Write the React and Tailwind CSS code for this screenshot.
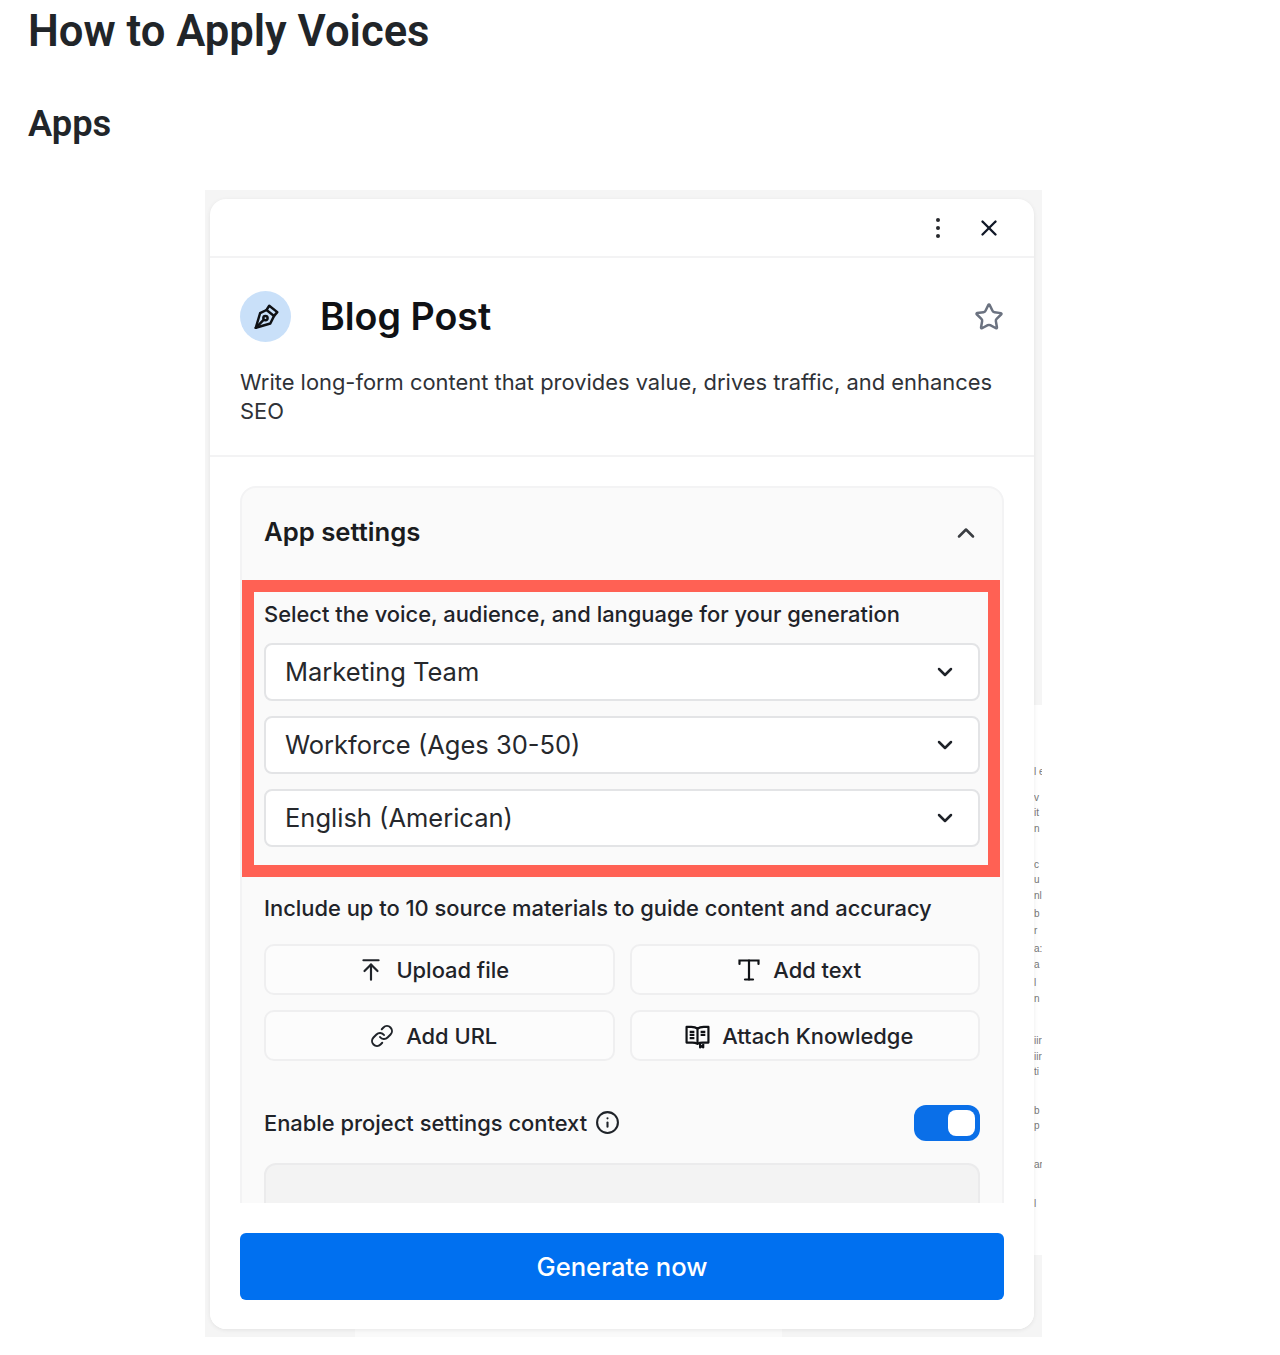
import { ChevronDown, ChevronUp, X, Star, ArrowUpToLine, Link, Info } from 'lucide-react'

const FONT = "font-['Inter','Noto_Sans',sans-serif]"

// tiny bits of the page behind the modal, cut off at the frame's right edge
const behind = [
  [766, 'l e'], [792, 'v'], [807, 'it'], [823, 'n'], [859, 'c'], [874, 'u'], [890, 'nl'],
  [908, 'b'], [925, 'r'], [943, 'a:'], [959, 'a'], [977, 'l'], [993, 'n'], [1035, 'iir'],
  [1051, 'iir'], [1066, 'ti'], [1105, 'b'], [1120, 'p'], [1159, 'ar'], [1198, 'l'],
]

function PenIcon() {
  return (
    <svg width="28" height="28" viewBox="0 0 26 26" fill="none" stroke="#0f1115" strokeWidth="2.300" strokeLinejoin="round" strokeLinecap="round">
      <path d="M16 2.500 23.500 8.500 20.500 12 13.500 6.500z" />
      <path d="M13.500 6.500 7.500 9.500 3.500 23l13.500-4 3.500-7" />
      <path d="M3.500 23l7-7" />
      <circle cx="12.500" cy="14" r="2" />
    </svg>
  )
}

function SerifT() {
  return (
    <svg width="24" height="24" viewBox="0 0 24 24" fill="none" stroke="#0f1115" strokeWidth="2.200" strokeLinecap="round">
      <path d="M2.500 6V2.500h19V6" />
      <path d="M12 2.500v19" />
      <path d="M8 21.500h8" />
    </svg>
  )
}

function BookIcon() {
  return (
    <svg width="25" height="25" viewBox="0 0 24 24" fill="none" stroke="#0f1115" strokeWidth="2.100" strokeLinejoin="round">
      <path d="M12 4.500c-1.500-1.200-3.500-1.700-6-1.700H1.500v15H7c2 0 3.500.3 5 1.200 1.500-.9 3-1.200 5-1.200h5.500v-15H18c-2.500 0-4.500.5-6 1.700z" />
      <path d="M12 4.500v14.500" />
      <path d="M4.500 7.500h4.500M4.500 10.500h4.500M4.500 13.500h4.500M15 7.500h4.500M15 10.500h4.500" />
      <path d="M14.500 19v3.500l1.500-1.200 1.500 1.200V19" />
    </svg>
  )
}

function Select({ label }) {
  return (
    <div className="h-[58px] flex items-center justify-between pl-[19px] pr-[21px] bg-white border-2 border-[#e3e4e6] rounded-lg">
      <span className="text-[25.500px] text-[#26282c]">{label}</span>
      <ChevronDown size={24} strokeWidth={2.500} className="text-[#1f2329]" />
    </div>
  )
}

function SourceButton({ icon, label }) {
  return (
    <button className="h-[51px] flex items-center justify-center gap-[12px] pr-[11px] pt-[1px] bg-[#fcfcfc] border-2 border-[#efeff0] rounded-[10px] text-[21.900px] font-medium text-[#1f2329]">
      {icon}
      <span>{label}</span>
    </button>
  )
}

export default function App() {
  return (
    <div className="bg-white min-h-[1355px] font-['Roboto',sans-serif] text-[#212529]">
      <h1 className="pl-[28px] pt-[6px] text-[43.600px] leading-[52px] font-semibold">How to Apply Voices</h1>
      <h2 className="pl-[28px] pt-[44px] text-[36.300px] leading-[44px] font-semibold">Apps</h2>

      <div className={`relative mt-[44px] ml-[205px] w-[837px] h-[1147px] bg-[#f5f5f5] pt-[9px] pl-[5px] ${FONT}`}>
        {/* page behind the modal, peeking out on the right */}
        <div className="absolute left-[829px] top-[515px] w-[8px] h-[550px] bg-white" />
        {behind.map(([y, t]) => (
          <span key={y} className="absolute left-[829px] w-[8px] overflow-hidden whitespace-nowrap text-[10px] leading-[12px] text-[#777] font-['Liberation_Sans',sans-serif]" style={{ top: y - 190 }}>{t}</span>
        ))}
        <div className="absolute left-[150px] right-[260px] bottom-0 h-[8px] bg-[#fafafa]" />

        <div className="relative w-[824px] h-[1130px] bg-white rounded-[16px] shadow-[0_1px_4px_rgba(0,0,0,0.08)] flex flex-col overflow-hidden">
          {/* top bar */}
          <div className="h-[59px] shrink-0 flex items-center justify-end gap-[36px] pr-[32px] border-b-2 border-[#f3f3f4]">
            <div className="flex flex-col gap-[4px]">
              <span className="w-[4px] h-[4px] rounded-full bg-[#26282c]" />
              <span className="w-[4px] h-[4px] rounded-full bg-[#26282c]" />
              <span className="w-[4px] h-[4px] rounded-full bg-[#26282c]" />
            </div>
            <X size={26} strokeWidth={2.200} className="text-[#111827]" />
          </div>

          {/* title */}
          <div className="h-[199px] shrink-0 px-[30px] pt-[33px] border-b-2 border-[#f3f3f4]">
            <div className="flex items-center">
              <div className="w-[51px] h-[51px] rounded-full bg-[#c9e0f9] flex items-center justify-center">
                <PenIcon />
              </div>
              <span className="ml-[29px] text-[37.600px] leading-[51px] font-semibold text-[#0f1115]">Blog Post</span>
              <Star size={30} strokeWidth={2} className="ml-auto text-[#6b7280]" />
            </div>
            <p className="mt-[26px] text-[21.900px] leading-[29px] text-[#2f3237]">
              Write long-form content that provides value, drives traffic, and enhances SEO
            </p>
          </div>

          {/* scroll area */}
          <div className="flex-1 min-h-0 overflow-hidden px-[30px] pt-[29px]">
            <div className="bg-[#fafafa] border-2 border-[#f3f3f4] rounded-[16px] h-[800px]">
              <div className="h-[92px] pb-[3px] flex items-center justify-between pl-[22px] pr-[22px]">
                <span className="text-[25.700px] font-semibold text-[#1a1c20]">App settings</span>
                <ChevronUp size={28} strokeWidth={2.200} className="text-[#3a3d42]" />
              </div>

              {/* red highlight */}
              <div className="border-[12px] border-[#ff6154] h-[297px] mr-[2px] pl-[10px] pr-[8px] pt-[7px]">
                <p className="text-[21.900px] leading-[30px] font-medium text-[#1f2329]">Select the voice, audience, and language for your generation</p>
                <div className="mt-[14px] flex flex-col gap-[15px]">
                  <Select label="Marketing Team" />
                  <Select label="Workforce (Ages 30-50)" />
                  <Select label="English (American)" />
                </div>
              </div>

              <div className="px-[22px]">
                <p className="mt-[16px] text-[21.900px] leading-[30px] font-medium text-[#1f2329]">Include up to 10 source materials to guide content and accuracy</p>
                <div className="mt-[21px] grid grid-cols-2 gap-x-[15px] gap-y-[15px]">
                  <SourceButton icon={<ArrowUpToLine size={26} strokeWidth={2} />} label="Upload file" />
                  <SourceButton icon={<SerifT />} label="Add text" />
                  <SourceButton icon={<Link size={24} strokeWidth={2} />} label="Add URL" />
                  <SourceButton icon={<BookIcon />} label="Attach Knowledge" />
                </div>
                <div className="mt-[44px] flex items-center justify-between">
                  <div className="flex items-center gap-[8px]">
                    <span className="text-[21.900px] font-medium text-[#1f2329]">Enable project settings context</span>
                    <Info size={25} strokeWidth={2} className="text-[#1f2329]" />
                  </div>
                  <div className="w-[66px] h-[36px] rounded-[12px] bg-[#0a6fe8] flex items-center justify-end pr-[5px]">
                    <span className="w-[27px] h-[26px] rounded-[8px] bg-white" />
                  </div>
                </div>
                <div className="mt-[22px] h-[120px] bg-[#f3f3f3] border-2 border-[#ebebec] rounded-[12px]" />
              </div>
            </div>
          </div>

          {/* footer */}
          <div className="h-[126px] shrink-0 bg-white px-[30px] pt-[30px]">
            <button className="w-full h-[67px] pt-[2px] rounded-[6px] bg-[#0070f0] text-white text-[25.600px] font-medium">Generate now</button>
          </div>
        </div>
      </div>
    </div>
  )
}
